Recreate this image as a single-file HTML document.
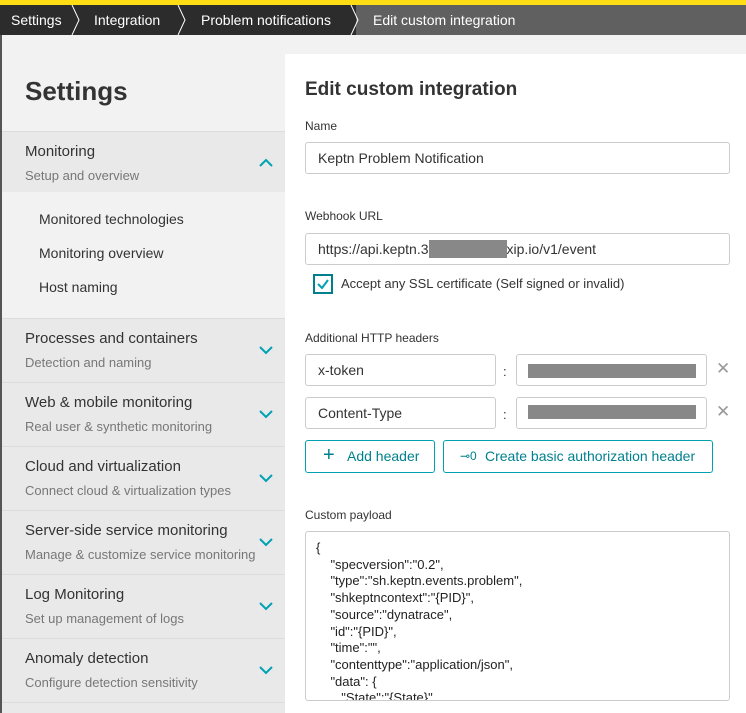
<!DOCTYPE html>
<html style="width:746px;height:713px;overflow:hidden"><head><meta charset="utf-8"><style>
*{box-sizing:border-box;margin:0;padding:0}
body{width:746px;height:713px;overflow:hidden;font-family:"Liberation Sans",sans-serif;color:#333;background:#f2f2f2;position:relative}
.yb{position:absolute;left:0;top:0;width:746px;height:5px;background:#ffdd15}
.bc{position:absolute;left:0;top:5px;width:746px;height:30px;background:#606060;color:#fff;font-size:14px}
.bc .dark{position:absolute;left:0;top:0;width:356px;height:30px;background:#2c2c2c}
.bc span{position:absolute;top:7px}
.sep{position:absolute;top:0}
.lb{position:absolute;left:0;top:35px;width:2px;height:678px;background:#555}
h1{position:absolute;left:25px;top:76px;font-size:26px;font-weight:bold;color:#333}
.grp{position:absolute;left:2px;width:283px;height:64px;background:#e9e9e9;border-top:1px solid #dcdcdc}
.grp .t{position:absolute;left:23px;top:11px;font-size:15px;color:#333}
.grp .s{position:absolute;left:23px;top:36px;font-size:13px;color:#777}
.grp svg{position:absolute;left:256px;top:26px}
.sub{position:absolute;left:39px;font-size:14px;color:#333}
.main{position:absolute;left:285px;top:54px;width:461px;height:659px;background:#fff}
h2{position:absolute;left:305px;top:79px;font-size:19px;font-weight:bold;color:#333}
.lbl{position:absolute;left:305px;font-size:12px;color:#333}
.inp{position:absolute;border:1px solid #ccc;border-radius:3px;background:#fff;font-size:14px;color:#333;padding-left:12px;line-height:30px}
.gray{position:absolute;background:#888}
.btn{position:absolute;top:440px;height:33px;border:1px solid #00a1b2;border-radius:3px;color:#00808f;font-size:14px;line-height:31px}
.x{position:absolute;left:716px;font-size:17px;color:#999}
pre{position:absolute;left:305px;top:531px;width:425px;height:170px;border:1px solid #ccc;border-radius:3px;font-family:"Liberation Sans",sans-serif;font-size:13px;line-height:16.7px;color:#222;padding:8px 0 0 10px;overflow:hidden}
</style></head><body>
<div class="yb"></div>
<div class="bc"><div class="dark"></div>
<span style="left:11px">Settings</span>
<svg class="sep" style="left:70px" width="12" height="30"><path d="M2 0 L9 15 L2 30" stroke="#fff" fill="none" stroke-width="1"/></svg>
<span style="left:94px">Integration</span>
<svg class="sep" style="left:176px" width="12" height="30"><path d="M2 0 L9 15 L2 30" stroke="#fff" fill="none" stroke-width="1"/></svg>
<span style="left:201px">Problem notifications</span>
<svg class="sep" style="left:349px" width="12" height="30"><path d="M2 0 L9 15 L2 30" stroke="#fff" fill="none" stroke-width="1"/></svg>
<span style="left:373px">Edit custom integration</span>
</div>
<div class="lb"></div>
<h1>Settings</h1>
<div class="grp" style="top:131px;height:61px"><div class="t">Monitoring</div><div class="s">Setup and overview</div><svg width="16" height="10"><path d="M2 8 L8 2 L14 8" stroke="#00a1b2" stroke-width="2" fill="none"/></svg></div>
<div class="sub" style="top:211px">Monitored technologies</div>
<div class="sub" style="top:245px">Monitoring overview</div>
<div class="sub" style="top:279px">Host naming</div>
<div class="grp" style="top:318px"><div class="t">Processes and containers</div><div class="s">Detection and naming</div><svg width="16" height="10"><path d="M2 2 L8 8 L14 2" stroke="#00a1b2" stroke-width="2" fill="none"/></svg></div>
<div class="grp" style="top:382px"><div class="t">Web &amp; mobile monitoring</div><div class="s">Real user &amp; synthetic monitoring</div><svg width="16" height="10"><path d="M2 2 L8 8 L14 2" stroke="#00a1b2" stroke-width="2" fill="none"/></svg></div>
<div class="grp" style="top:446px"><div class="t">Cloud and virtualization</div><div class="s">Connect cloud &amp; virtualization types</div><svg width="16" height="10"><path d="M2 2 L8 8 L14 2" stroke="#00a1b2" stroke-width="2" fill="none"/></svg></div>
<div class="grp" style="top:510px"><div class="t">Server-side service monitoring</div><div class="s">Manage &amp; customize service monitoring</div><svg width="16" height="10"><path d="M2 2 L8 8 L14 2" stroke="#00a1b2" stroke-width="2" fill="none"/></svg></div>
<div class="grp" style="top:574px"><div class="t">Log Monitoring</div><div class="s">Set up management of logs</div><svg width="16" height="10"><path d="M2 2 L8 8 L14 2" stroke="#00a1b2" stroke-width="2" fill="none"/></svg></div>
<div class="grp" style="top:638px"><div class="t">Anomaly detection</div><div class="s">Configure detection sensitivity</div><svg width="16" height="10"><path d="M2 2 L8 8 L14 2" stroke="#00a1b2" stroke-width="2" fill="none"/></svg></div>
<div class="grp" style="top:702px;height:11px"></div>
<div class="main"></div>
<h2>Edit custom integration</h2>
<div class="lbl" style="top:119px">Name</div>
<div class="inp" style="left:305px;top:142px;width:425px;height:32px">Keptn Problem Notification</div>
<div class="lbl" style="top:209px">Webhook URL</div>
<div class="inp" style="left:305px;top:233px;width:425px;height:32px">https://api.keptn.3<span style="display:inline-block;width:78px;height:18px;background:#888;vertical-align:-4px"></span>xip.io/v1/event</div>
<div style="position:absolute;left:313px;top:274px;width:20px;height:20px;border:2px solid #00808f"><svg width="16" height="16" style="position:absolute;left:0;top:0"><path d="M3 8 L7 12 L13 4" stroke="#00a1b2" stroke-width="2" fill="none"/></svg></div>
<div style="position:absolute;left:341px;top:276px;font-size:13px">Accept any SSL certificate (Self signed or invalid)</div>
<div class="lbl" style="top:331px">Additional HTTP headers</div>
<div class="inp" style="left:305px;top:354px;width:191px;height:32px">x-token</div>
<div style="position:absolute;left:503px;top:364px;font-size:13px">:</div>
<div class="inp" style="left:516px;top:354px;width:191px;height:32px"></div>
<div class="gray" style="left:528px;top:364px;width:168px;height:14px"></div>
<div class="x" style="top:359px">✕</div>
<div class="inp" style="left:305px;top:397px;width:191px;height:32px">Content-Type</div>
<div style="position:absolute;left:503px;top:407px;font-size:13px">:</div>
<div class="inp" style="left:516px;top:397px;width:191px;height:32px"></div>
<div class="gray" style="left:528px;top:405px;width:168px;height:14px"></div>
<div class="x" style="top:402px">✕</div>
<div class="btn" style="left:305px;width:130px"><span style="position:absolute;left:17px;top:-1px;font-size:20px">+</span><span style="position:absolute;left:41px">Add header</span></div>
<div class="btn" style="left:443px;width:270px"><span style="position:absolute;left:16px;font-size:12px">⊸0</span><span style="position:absolute;left:41px">Create basic authorization header</span></div>
<div class="lbl" style="top:508px">Custom payload</div>
<pre>{
    "specversion":"0.2",
    "type":"sh.keptn.events.problem",
    "shkeptncontext":"{PID}",
    "source":"dynatrace",
    "id":"{PID}",
    "time":"",
    "contenttype":"application/json",
    "data": {
       "State":"{State}"</pre>
</body></html>
